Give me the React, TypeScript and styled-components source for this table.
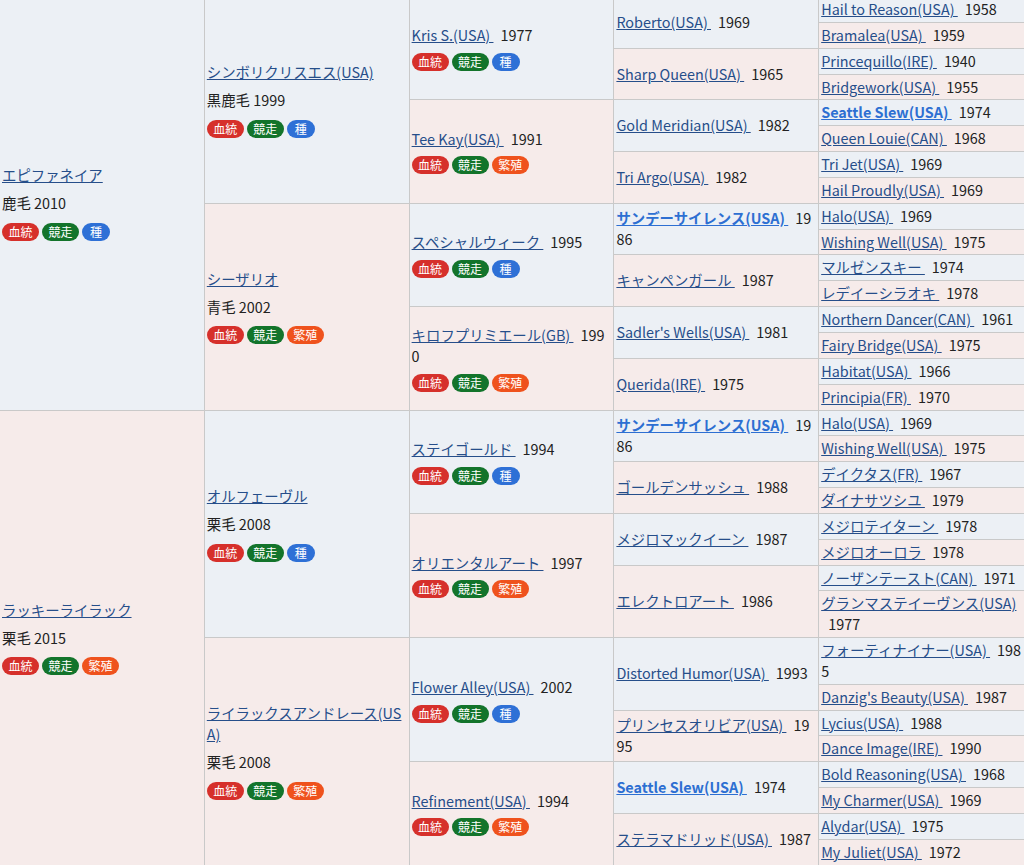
import React from "react";
import styled, { createGlobalStyle } from "styled-components";

type BadgeKind = "blood" | "race" | "sire" | "mare";
type Sex = "m" | "f";

interface Horse {
  name: string;
  year: string;
  sex: Sex;
  coat?: string;
  badges?: BadgeKind[];
  bold?: boolean;
  children?: Horse[];
}

const h = (
  name: string,
  year: string,
  sex: Sex,
  opts: Partial<Horse> = {},
  children?: Horse[]
): Horse => ({ name, year, sex, ...opts, children });

const SIRE: BadgeKind[] = ["blood", "race", "sire"];
const MARE: BadgeKind[] = ["blood", "race", "mare"];

const pedigree: Horse[] = [
  h("エピファネイア", "2010", "m", { coat: "鹿毛", badges: SIRE }, [
    h("シンボリクリスエス(USA)", "1999", "m", { coat: "黒鹿毛", badges: SIRE }, [
      h("Kris S.(USA)", "1977", "m", { badges: SIRE }, [
        h("Roberto(USA)", "1969", "m", {}, [
          h("Hail to Reason(USA)", "1958", "m"),
          h("Bramalea(USA)", "1959", "f"),
        ]),
        h("Sharp Queen(USA)", "1965", "f", {}, [
          h("Princequillo(IRE)", "1940", "m"),
          h("Bridgework(USA)", "1955", "f"),
        ]),
      ]),
      h("Tee Kay(USA)", "1991", "f", { badges: MARE }, [
        h("Gold Meridian(USA)", "1982", "m", {}, [
          h("Seattle Slew(USA)", "1974", "m", { bold: true }),
          h("Queen Louie(CAN)", "1968", "f"),
        ]),
        h("Tri Argo(USA)", "1982", "f", {}, [
          h("Tri Jet(USA)", "1969", "m"),
          h("Hail Proudly(USA)", "1969", "f"),
        ]),
      ]),
    ]),
    h("シーザリオ", "2002", "f", { coat: "青毛", badges: MARE }, [
      h("スペシャルウィーク", "1995", "m", { badges: SIRE }, [
        h("サンデーサイレンス(USA)", "1986", "m", { bold: true }, [
          h("Halo(USA)", "1969", "m"),
          h("Wishing Well(USA)", "1975", "f"),
        ]),
        h("キャンペンガール", "1987", "f", {}, [
          h("マルゼンスキー", "1974", "m"),
          h("レデイーシラオキ", "1978", "f"),
        ]),
      ]),
      h("キロフプリミエール(GB)", "1990", "f", { badges: MARE }, [
        h("Sadler's Wells(USA)", "1981", "m", {}, [
          h("Northern Dancer(CAN)", "1961", "m"),
          h("Fairy Bridge(USA)", "1975", "f"),
        ]),
        h("Querida(IRE)", "1975", "f", {}, [
          h("Habitat(USA)", "1966", "m"),
          h("Principia(FR)", "1970", "f"),
        ]),
      ]),
    ]),
  ]),
  h("ラッキーライラック", "2015", "f", { coat: "栗毛", badges: MARE }, [
    h("オルフェーヴル", "2008", "m", { coat: "栗毛", badges: SIRE }, [
      h("ステイゴールド", "1994", "m", { badges: SIRE }, [
        h("サンデーサイレンス(USA)", "1986", "m", { bold: true }, [
          h("Halo(USA)", "1969", "m"),
          h("Wishing Well(USA)", "1975", "f"),
        ]),
        h("ゴールデンサッシュ", "1988", "f", {}, [
          h("デイクタス(FR)", "1967", "m"),
          h("ダイナサツシユ", "1979", "f"),
        ]),
      ]),
      h("オリエンタルアート", "1997", "f", { badges: MARE }, [
        h("メジロマックイーン", "1987", "m", {}, [
          h("メジロテイターン", "1978", "m"),
          h("メジロオーロラ", "1978", "f"),
        ]),
        h("エレクトロアート", "1986", "f", {}, [
          h("ノーザンテースト(CAN)", "1971", "m"),
          h("グランマステイーヴンス(USA)", "1977", "f"),
        ]),
      ]),
    ]),
    h("ライラックスアンドレース(USA)", "2008", "f", { coat: "栗毛", badges: MARE }, [
      h("Flower Alley(USA)", "2002", "m", { badges: SIRE }, [
        h("Distorted Humor(USA)", "1993", "m", {}, [
          h("フォーティナイナー(USA)", "1985", "m"),
          h("Danzig's Beauty(USA)", "1987", "f"),
        ]),
        h("プリンセスオリビア(USA)", "1995", "f", {}, [
          h("Lycius(USA)", "1988", "m"),
          h("Dance Image(IRE)", "1990", "f"),
        ]),
      ]),
      h("Refinement(USA)", "1994", "f", { badges: MARE }, [
        h("Seattle Slew(USA)", "1974", "m", { bold: true }, [
          h("Bold Reasoning(USA)", "1968", "m"),
          h("My Charmer(USA)", "1969", "f"),
        ]),
        h("ステラマドリッド(USA)", "1987", "f", {}, [
          h("Alydar(USA)", "1975", "m"),
          h("My Juliet(USA)", "1972", "f"),
        ]),
      ]),
    ]),
  ]),
];

const BADGE_INFO: Record<BadgeKind, { label: string; color: string }> = {
  blood: { label: "血統", color: "#d6302b" },
  race: { label: "競走", color: "#13742b" },
  sire: { label: "種", color: "#2e70d6" },
  mare: { label: "繁殖", color: "#ef521d" },
};

const GlobalStyle = createGlobalStyle`
  html, body {
    margin: 0;
    padding: 0;
    background: #ffffff;
    overflow: hidden;
  }
  body {
    font-family: "Noto Sans CJK JP", "Noto Sans", sans-serif;
    font-size: 14.4px;
    color: #222222;
  }
`;

const Table = styled.div`
  display: flex;
  flex-direction: column;
  width: 1024px;
  margin-top: -3px;
`;

const Branch = styled.div`
  display: flex;
  flex: 1 1 auto;
`;

const Cell = styled.div<{ $sex: Sex; $cols: number }>`
  box-sizing: border-box;
  flex: 0 0 calc(100% / ${(p) => p.$cols});
  width: calc(100% / ${(p) => p.$cols});
  display: flex;
  flex-direction: column;
  justify-content: center;
  padding: 2px;
  line-height: 20.85px;
  background: ${(p) => (p.$sex === "m" ? "#ecf0f5" : "#f6ebea")};
  border-right: ${(p) => (p.$cols === 1 ? "none" : "1px solid #c9c9c9")};
  border-bottom: 1px solid #c9c9c9;
  word-break: break-all;
`;

const Children = styled.div`
  flex: 1 1 auto;
  display: flex;
  flex-direction: column;
`;

const NameLine = styled.div``;

const HorseLink = styled.a<{ $bold?: boolean }>`
  color: ${(p) => (p.$bold ? "#2d6fd2" : "#264e8a")};
  font-weight: ${(p) => (p.$bold ? 700 : 400)};
  text-decoration: underline;
  cursor: pointer;
`;

const Year = styled.span`
  padding-left: 7px;
`;

const Info = styled.div`
  margin-top: 7px;
`;

const Badges = styled.div<{ $afterInfo: boolean }>`
  display: flex;
  gap: 3px;
  margin-top: ${(p) => (p.$afterInfo ? 9 : 7)}px;
`;

const Badge = styled.span<{ $color: string }>`
  box-sizing: border-box;
  display: inline-block;
  min-width: 28px;
  height: 18px;
  padding: 0 6.5px;
  border-radius: 9px;
  background: ${(p) => p.$color};
  color: #ffffff;
  font-size: 12px;
  line-height: 18px;
  text-align: center;
`;

const PedigreeBranch: React.FC<{ horse: Horse; depth: number }> = ({ horse, depth }) => {
  const cols = 5 - depth;
  const showYearInline = depth >= 2;
  return (
    <Branch>
      <Cell $sex={horse.sex} $cols={cols}>
        <NameLine>
          <HorseLink $bold={horse.bold}>{horse.name + " "}</HorseLink>
          {showYearInline && <Year>{horse.year}</Year>}
        </NameLine>
        {!showYearInline && (
          <Info>
            {horse.coat} {horse.year}
          </Info>
        )}
        {horse.badges && (
          <Badges $afterInfo={!showYearInline}>
            {horse.badges.map((b) => (
              <Badge key={b} $color={BADGE_INFO[b].color}>
                {BADGE_INFO[b].label}
              </Badge>
            ))}
          </Badges>
        )}
      </Cell>
      {horse.children && (
        <Children>
          {horse.children.map((c, i) => (
            <PedigreeBranch key={i} horse={c} depth={depth + 1} />
          ))}
        </Children>
      )}
    </Branch>
  );
};

export default function App() {
  return (
    <>
      <GlobalStyle />
      <Table>
        {pedigree.map((horse, i) => (
          <PedigreeBranch key={i} horse={horse} depth={0} />
        ))}
      </Table>
    </>
  );
}
